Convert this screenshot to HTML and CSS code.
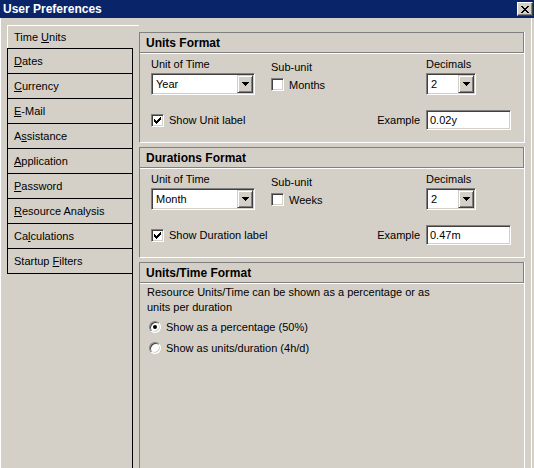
FILE: index.html
```html
<!DOCTYPE html>
<html lang="en">
<head>
    <meta charset="UTF-8">
    <title>User Preferences</title>
    <link rel="stylesheet" href="styles.css">
</head>
<body>

    <div class="window">
        <div class="titlebar">
            <span class="title">User Preferences</span>
            <span class="close">
                <svg width="8" height="7" viewBox="0 0 8 7" shape-rendering="crispEdges">
                    <path d="M0 0h2v1h-2z M6 0h2v1h-2z M1 1h2v1h-2z M5 1h2v1h-2z M2 2h4v1h-4z M3 3h2v1h-2z M2 4h4v1h-4z M1 5h2v1h-2z M5 5h2v1h-2z M0 6h2v1h-2z M6 6h2v1h-2z" fill="#000"/>
                </svg>
            </span>
        </div>

        <div class="client">
            <div class="nav">
                <div class="tab active"><span>Time <u>U</u>nits</span></div>
                <div class="tab"><span><u>D</u>ates</span></div>
                <div class="tab"><span><u>C</u>urrency</span></div>
                <div class="tab"><span><u>E</u>-Mail</span></div>
                <div class="tab"><span>A<u>s</u>sistance</span></div>
                <div class="tab"><span><u>A</u>pplication</span></div>
                <div class="tab"><span><u>P</u>assword</span></div>
                <div class="tab"><span><u>R</u>esource Analysis</span></div>
                <div class="tab"><span>Ca<u>l</u>culations</span></div>
                <div class="tab last"><span>Startup <u>F</u>ilters</span></div>
                <div class="nav-rest"></div>
            </div>

            <div class="panel">
                <div class="section">
                    <div class="section-head">Units Format</div>
                    <div class="section-body">
                        <div class="grid">
                            <div>
                                <div class="field-label">Unit of Time</div>
                                <div class="combo wide"><span class="combo-text">Year</span><span class="combo-btn"><svg width="7" height="4" viewBox="0 0 7 4" shape-rendering="crispEdges"><path d="M0 0h7v1h-7z M1 1h5v1h-5z M2 2h3v1h-3z M3 3h1v1h-1z" fill="#000"/></svg></span></div>
                            </div>
                            <div>
                                <div class="field-label sub">Sub-unit</div>
                                <div class="check sub-check"><span class="box"></span><span>Months</span></div>
                            </div>
                            <div>
                                <div class="field-label">Decimals</div>
                                <div class="combo small"><span class="combo-text">2</span><span class="combo-btn"><svg width="7" height="4" viewBox="0 0 7 4" shape-rendering="crispEdges"><path d="M0 0h7v1h-7z M1 1h5v1h-5z M2 2h3v1h-3z M3 3h1v1h-1z" fill="#000"/></svg></span></div>
                            </div>
                        </div>
                        <div class="grid row2">
                            <div class="check"><span class="box"><svg width="7" height="7" viewBox="0 0 7 7" shape-rendering="crispEdges"><path d="M6 0h1v1h-1z M5 1h2v1h-2z M0 2h1v1h-1z M4 2h3v1h-3z M0 3h2v1h-2z M3 3h3v1h-3z M0 4h5v1h-5z M1 5h3v1h-3z M2 6h1v1h-1z" fill="#000"/></svg></span><span>Show Unit label</span></div>
                            <div class="example-label">Example</div>
                            <div class="textbox">0.02y</div>
                        </div>
                    </div>
                </div>

                <div class="section">
                    <div class="section-head">Durations Format</div>
                    <div class="section-body">
                        <div class="grid">
                            <div>
                                <div class="field-label">Unit of Time</div>
                                <div class="combo wide"><span class="combo-text">Month</span><span class="combo-btn"><svg width="7" height="4" viewBox="0 0 7 4" shape-rendering="crispEdges"><path d="M0 0h7v1h-7z M1 1h5v1h-5z M2 2h3v1h-3z M3 3h1v1h-1z" fill="#000"/></svg></span></div>
                            </div>
                            <div>
                                <div class="field-label sub">Sub-unit</div>
                                <div class="check sub-check"><span class="box"></span><span>Weeks</span></div>
                            </div>
                            <div>
                                <div class="field-label">Decimals</div>
                                <div class="combo small"><span class="combo-text">2</span><span class="combo-btn"><svg width="7" height="4" viewBox="0 0 7 4" shape-rendering="crispEdges"><path d="M0 0h7v1h-7z M1 1h5v1h-5z M2 2h3v1h-3z M3 3h1v1h-1z" fill="#000"/></svg></span></div>
                            </div>
                        </div>
                        <div class="grid row2">
                            <div class="check"><span class="box"><svg width="7" height="7" viewBox="0 0 7 7" shape-rendering="crispEdges"><path d="M6 0h1v1h-1z M5 1h2v1h-2z M0 2h1v1h-1z M4 2h3v1h-3z M0 3h2v1h-2z M3 3h3v1h-3z M0 4h5v1h-5z M1 5h3v1h-3z M2 6h1v1h-1z" fill="#000"/></svg></span><span>Show Duration label</span></div>
                            <div class="example-label">Example</div>
                            <div class="textbox">0.47m</div>
                        </div>
                    </div>
                </div>

                <div class="section last">
                    <div class="section-head">Units/Time Format</div>
                    <div class="section-body plain">
                        <p class="desc">Resource Units/Time can be shown as a percentage or as units per duration</p>
                        <div class="radio-row"><span class="radio checked"></span><span>Show as a percentage (50%)</span></div>
                        <div class="radio-row"><span class="radio"></span><span>Show as units/duration (4h/d)</span></div>
                    </div>
                </div>
            </div>
        </div>
    </div>

</body>
</html>
```

FILE: styles.css
```css
* {
    box-sizing: border-box;
}

body {
    margin: 0;
    background: #d4d0c8;
    font-family: "Liberation Sans", Arial, sans-serif;
    font-size: 11px;
    color: #000;
    overflow: hidden;
}

.window {
    width: 534px;
    height: 468px;
    display: flex;
    flex-direction: column;
}

/* title bar */

.titlebar {
    height: 18px;
    flex: none;
    background: #0a246a;
    color: #fff;
    display: flex;
    align-items: center;
    justify-content: space-between;
    padding: 0 1px 0 3px;
}

.title {
    font-weight: bold;
    font-size: 12px;
}

.close {
    width: 16px;
    height: 14px;
    background: #d4d0c8;
    border: 1px solid;
    border-color: #fff #404040 #404040 #fff;
    box-shadow: inset -1px -1px 0 #808080;
    display: flex;
    align-items: center;
    justify-content: center;
}

/* client area */

.client {
    flex: 1;
    display: flex;
    border-left: 1px solid #fff;
    padding: 7px 0 0 6px;
    box-shadow: inset -2px 0 0 #d4d0c8, inset -3px 0 0 #fff;
}

.nav {
    width: 126px;
    flex: none;
    display: flex;
    flex-direction: column;
}

.tab {
    height: 25px;
    flex: none;
    border: 1px solid #000;
    border-bottom: none;
    padding-left: 6px;
    display: flex;
    align-items: center;
    white-space: nowrap;
}

.tab.active {
    height: 23px;
    border: none;
    border-top: 1px solid #fff;
    border-left: 1px solid #fff;
    margin-right: -6px;
}

.tab.last {
    height: 26px;
    border-bottom: 1px solid #000;
}

.nav-rest {
    flex: 1;
    border-right: 1px solid #000;
}

.panel {
    width: 386px;
    margin: 7px 0 0 6px;
    display: flex;
    flex-direction: column;
}

.section {
    height: 111px;
    flex: none;
    margin-bottom: 4px;
    border-left: 1px solid #808080;
    border-right: 1px solid #fff;
    border-bottom: 1px solid #fff;
}

.section.last {
    flex: 1;
    margin-bottom: 0;
    border-bottom: none;
}

.section-head {
    height: 21px;
    border-top: 1px solid #808080;
    border-bottom: 1px solid #808080;
    border-right: 1px solid #808080;
    box-shadow: 0 1px 0 #fff;
    padding-left: 6px;
    display: flex;
    align-items: center;
    font-weight: bold;
    font-size: 12px;
}

.section-body {
    padding: 5px 0 0 11px;
}

.section-body.plain {
    padding: 2px 0 0 7px;
}

.grid {
    display: grid;
    grid-template-columns: 120px 155px 85px;
}

.row2 {
    margin-top: 15px;
    align-items: center;
}

.field-label {
    line-height: 13px;
    margin-bottom: 2px;
}

.field-label.sub {
    margin-top: 3px;
    margin-bottom: 4px;
}

/* sunken controls */

.combo,
.textbox,
.box {
    background: #fff;
    border: 1px solid;
    border-color: #808080 #fff #fff #808080;
    box-shadow: inset 1px 1px 0 #404040, inset -1px -1px 0 #d4d0c8;
}

.combo {
    height: 22px;
    padding: 1px;
    display: flex;
}

.combo.wide {
    width: 104px;
}

.combo.small {
    width: 50px;
}

.combo-text {
    flex: 1;
    padding-left: 3px;
    display: flex;
    align-items: center;
}

.combo-btn {
    width: 16px;
    background: #d4d0c8;
    border: 1px solid;
    border-color: #d4d0c8 #404040 #404040 #d4d0c8;
    box-shadow: inset 1px 1px 0 #fff, inset -1px -1px 0 #808080;
    display: flex;
    align-items: center;
    justify-content: center;
}

.textbox {
    width: 85px;
    height: 20px;
    padding-left: 3px;
    display: flex;
    align-items: center;
}

.check {
    display: flex;
    align-items: center;
    gap: 5px;
    white-space: nowrap;
}

.box {
    width: 13px;
    height: 13px;
    flex: none;
    display: flex;
    align-items: center;
    justify-content: center;
}

.example-label {
    text-align: right;
    padding-right: 6px;
}

/* units/time */

.desc {
    margin: 0;
    width: 295px;
    line-height: 15px;
}

.radio-row {
    height: 16px;
    margin-top: 4px;
    display: flex;
    align-items: center;
    gap: 5px;
}

.radio-row + .radio-row {
    margin-top: 5px;
}

.radio {
    width: 12px;
    height: 12px;
    margin-left: 2px;
    border-radius: 50%;
    background: #fff;
    border: 1px solid;
    border-color: #808080 #fff #fff #808080;
    box-shadow: inset 1px 1px 0 #404040, inset -1px -1px 0 #d4d0c8;
    display: flex;
    align-items: center;
    justify-content: center;
}

.radio.checked::after {
    content: "";
    width: 4px;
    height: 4px;
    border-radius: 50%;
    background: #000;
}
```
